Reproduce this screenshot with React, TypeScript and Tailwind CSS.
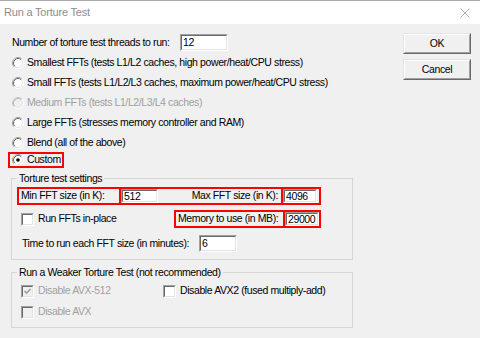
import React from "react";

const RED = "border-[#ff0000]";

function Radio({ checked, disabled }: { checked?: boolean; disabled?: boolean }) {
  return (
    <svg width="12" height="12" viewBox="0 0 12 12" className="shrink-0">
      <circle cx="6" cy="6" r="5" fill={disabled ? "#f0f0f0" : "#ffffff"} />
      <path d="M2.11 9.89 A5.5 5.5 0 0 1 9.89 2.11" fill="none" stroke={disabled ? "#c8c8c8" : "#a0a0a0"} strokeWidth="1" />
      <path d="M2.82 9.18 A4.5 4.5 0 0 1 9.18 2.82" fill="none" stroke={disabled ? "#b4b4b4" : "#696969"} strokeWidth="1" />
      <path d="M2.11 9.89 A5.5 5.5 0 0 0 9.89 2.11" fill="none" stroke="#ffffff" strokeWidth="1" />
      <path d="M2.82 9.18 A4.5 4.5 0 0 0 9.18 2.82" fill="none" stroke="#e3e3e3" strokeWidth="1" />
      {checked && <circle cx="6" cy="6" r="1.8" fill="#000000" />}
    </svg>
  );
}

function Check({ checked, disabled }: { checked?: boolean; disabled?: boolean }) {
  return (
    <span className="block w-[13px] h-[13px] shrink-0 border border-t-[#a0a0a0] border-l-[#a0a0a0] border-r-white border-b-white">
      <span
        className={`block w-full h-full border border-t-[#696969] border-l-[#696969] border-r-[#e3e3e3] border-b-[#e3e3e3] ${
          disabled ? "bg-[#f0f0f0]" : "bg-white"
        }`}
      >
        {checked && (
          <svg width="9" height="9" viewBox="0 0 9 9" className="block">
            <path d="M1.5 4 L3.5 6 L7.5 2" fill="none" stroke={disabled ? "#a0a0a0" : "#000"} strokeWidth="1.6" />
          </svg>
        )}
      </span>
    </span>
  );
}

function Edit({ value, className }: { value: string; className: string }) {
  return (
    <div className={`shrink-0 border border-t-[#a0a0a0] border-l-[#a0a0a0] border-r-white border-b-white ${className}`}>
      <div className="h-full border border-t-[#696969] border-l-[#696969] border-r-[#e3e3e3] border-b-[#e3e3e3] bg-white pl-[1px] flex items-center leading-none">
        {value}
      </div>
    </div>
  );
}

function RadioRow({
  label,
  checked,
  disabled,
  h = "h-[20px]",
}: {
  label: string;
  checked?: boolean;
  disabled?: boolean;
  h?: string;
}) {
  return (
    <div className={`flex items-center gap-[3px] pl-[1px] ${h}`}>
      <Radio checked={checked} disabled={disabled} />
      <span className={disabled ? "text-[#a0a0a0]" : ""}>{label}</span>
    </div>
  );
}

function Button({ children }: { children: React.ReactNode }) {
  return (
    <div className="w-[68px] h-[21px] border border-t-[#e3e3e3] border-l-[#e3e3e3] border-r-[#696969] border-b-[#696969] bg-[#f0f0f0]">
      <div className="h-full border border-t-white border-l-white border-r-[#a0a0a0] border-b-[#a0a0a0] flex items-center justify-center">
        {children}
      </div>
    </div>
  );
}

export default function App() {
  return (
    <div className="w-[480px] h-[338px] overflow-hidden bg-[#f0f0f0] text-black text-[10.5px] tracking-[-0.4px] font-['Liberation_Sans',Arial,sans-serif]">
      <div className="h-[24px] bg-white border-t border-[#a9a9a9] flex items-center justify-between pl-[4px] pr-[10px]">
        <span className="text-[11px] text-[#8c8c8c] tracking-[-0.2px]">Run a Torture Test</span>
        <svg width="10" height="10" viewBox="0 0 10 10">
          <path d="M0.5 0.5 L9.5 9.5 M9.5 0.5 L0.5 9.5" stroke="#b0b0b0" strokeWidth="1" />
        </svg>
      </div>

      <div className="flex">
        <div className="w-[403px] shrink-0 pl-[11px] pt-[10px] flex flex-col">
          <div className="h-[17px] flex items-center pl-[1px]">
            <span className="w-[168px]">Number of torture test threads to run:</span>
            <Edit value="12" className="w-[48px] h-[17px]" />
          </div>

          <div className="mt-[2px] flex flex-col">
            <RadioRow label="Smallest FFTs (tests L1/L2 caches, high power/heat/CPU stress)" />
            <RadioRow label="Small FFTs (tests L1/L2/L3 caches, maximum power/heat/CPU stress)" />
            <RadioRow label="Medium FFTs (tests L1/L2/L3/L4 caches)" disabled />
            <RadioRow label="Large FFTs (stresses memory controller and RAM)" />
            <RadioRow label="Blend (all of the above)" h="h-[19px]" />
            <div className={`ml-[-3px] w-[56px] h-[16px] border-2 ${RED} flex items-center gap-[3px] pl-[2px]`}>
              <Radio checked />
              <span>Custom</span>
            </div>
          </div>

          <fieldset className="mt-[3px] w-[342px] border border-[#d5d5d5] px-[5px] pb-[7px]">
            <legend className="px-[2px] leading-[14px]">Torture test settings</legend>
            <div className={`mt-[2px] w-[304px] h-[18px] border-2 ${RED} flex`}>
              <span className={`w-[102px] border-r-2 ${RED} pl-[2px] flex items-center`}>Min FFT size (in K):</span>
              <Edit value="512" className="w-[37px] h-full" />
              <span className={`w-[125px] border-r-2 ${RED} flex items-center justify-end pr-[3px]`}>Max FFT size (in K):</span>
              <Edit value="4096" className="w-[34px] h-full" />
            </div>
            <div className="mt-[5px] w-[304px] h-[18px] flex items-center">
              <div className="pl-[4px] flex items-center gap-[4px]">
                <Check />
                <span>Run FFTs in-place</span>
              </div>
              <div className={`ml-auto w-[147px] h-[18px] border-2 ${RED} flex`}>
                <span className={`flex-1 border-r-2 ${RED} pl-[2px] flex items-center`}>Memory to use (in MB):</span>
                <Edit value="29000" className="w-[34px] h-full" />
              </div>
            </div>
            <div className="mt-[7px] h-[17px] flex items-center pl-[5px]">
              <span className="w-[177px]">Time to run each FFT size (in minutes):</span>
              <Edit value="6" className="w-[38px] h-[17px]" />
            </div>
          </fieldset>

          <fieldset className="mt-[5px] w-[342px] border border-[#d5d5d5] px-[5px] pb-[8px]">
            <legend className="px-[2px] leading-[14px]">Run a Weaker Torture Test (not recommended)</legend>
            <div className="mt-[5px] h-[14px] flex items-center pl-[4px]">
              <div className="w-[142px] flex items-center gap-[4px]">
                <Check checked disabled />
                <span className="text-[#a0a0a0]">Disable AVX-512</span>
              </div>
              <div className="flex items-center gap-[4px]">
                <Check />
                <span>Disable AVX2 (fused multiply-add)</span>
              </div>
            </div>
            <div className="mt-[7px] h-[14px] flex items-center gap-[4px] pl-[4px]">
              <Check disabled />
              <span className="text-[#a0a0a0]">Disable AVX</span>
            </div>
          </fieldset>
        </div>

        <div className="pt-[9px] flex flex-col gap-[5px]">
          <Button>OK</Button>
          <Button>Cancel</Button>
        </div>
      </div>
    </div>
  );
}
